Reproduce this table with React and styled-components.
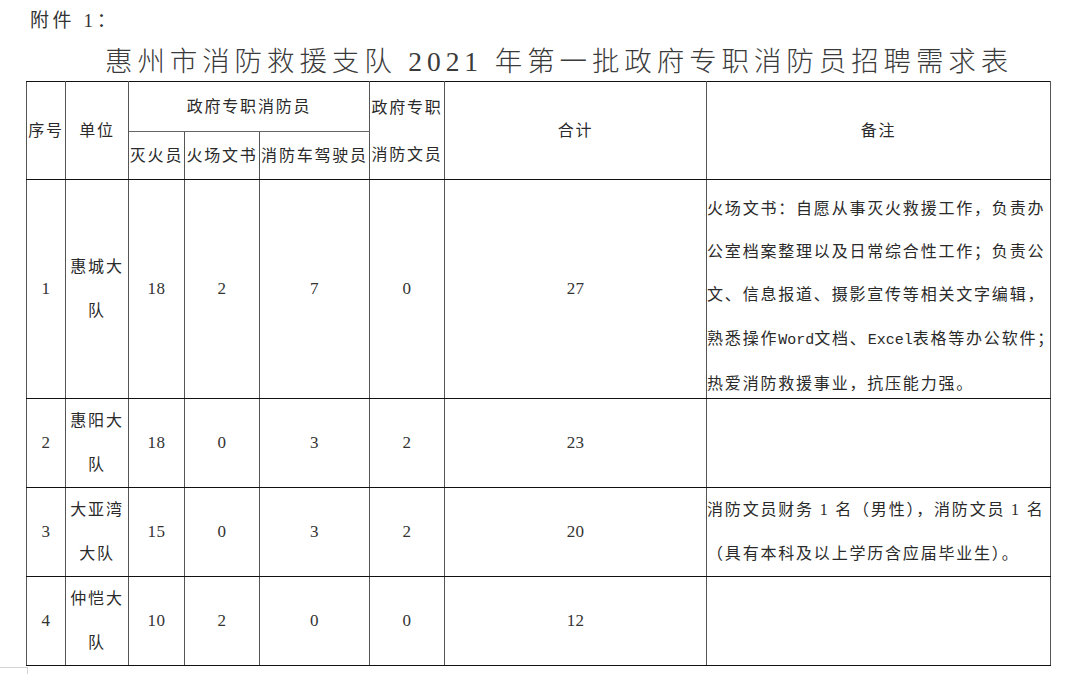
import React from "react";
import styled, { createGlobalStyle } from "styled-components";

const Global = createGlobalStyle`
  html, body { margin: 0; padding: 0; background: #ffffff; }
  body {
    font-family: "Liberation Serif", "Noto Sans CJK SC", serif;
    color: #262626;
  }
`;

const Page = styled.div`
  width: 1080px;
  height: 674px;
  overflow: hidden;
  background: #fff;
`;

const Attachment = styled.div`
  padding: 9px 0 0 30px;
  font-size: 19px;
  line-height: 24px;
  letter-spacing: 3.6px;
  color: #333;
  font-family: "Liberation Serif", "Noto Sans CJK SC", serif;
`;

const Title = styled.h1`
  margin: 0;
  padding: 9px 0 0 105px;
  font-size: 27.5px;
  line-height: 39px;
  font-weight: 300;
  letter-spacing: 4.9px;
  color: #3a3a3a;
  white-space: nowrap;
  font-family: "Liberation Serif", "Noto Sans CJK SC", serif;
`;

const TableWrap = styled.div`
  padding-left: 26px;
`;

const Table = styled.table`
  width: 1024px;
  table-layout: fixed;
  border-collapse: collapse;
  border: 1px solid #111;
  font-size: 16px;
  letter-spacing: 1.8px;
  color: #2a2a2a;
`;

const Head = styled.th`
  font-weight: 400;
  padding: 0;
  text-align: center;
  vertical-align: middle;
  white-space: ${(p) => (p.$nowrap ? "nowrap" : "normal")};
  height: ${(p) => (p.$h ? `${p.$h}px` : "auto")};
  line-height: ${(p) => p.$lh || 24}px;
  border-top: 1px solid #111;
  border-bottom: 1px solid ${(p) => (p.$softBottom ? "#666" : "#111")};
  border-left: 1px solid #555;
  border-right: 1px solid #555;
`;

const Cell = styled.td`
  padding: 0;
  text-align: ${(p) => (p.$left ? "left" : "center")};
  vertical-align: ${(p) => (p.$top ? "top" : "middle")};
  line-height: 44px;
  border-top: 1px solid #111;
  border-bottom: 1px solid #111;
  border-left: 1px solid #555;
  border-right: 1px solid #555;
`;

const Num = styled.span`
  font-family: "Liberation Serif", serif;
  font-size: 17px;
  letter-spacing: 0.4px;
  color: #333;
`;

const Notes = styled.div`
  white-space: nowrap;
  line-height: ${(p) => p.$lh || 44}px;
  padding-top: ${(p) => p.$shift || 0}px;
  margin-bottom: ${(p) => -(p.$shift || 0)}px;
`;

const Latin = styled.span`
  font-family: "Liberation Mono", monospace;
  font-size: 15px;
  letter-spacing: 0;
`;

const CornerMark = styled.div`
  width: 28px;
  height: 10px;
  margin-top: 1px;
  border-top: 1px solid #d4d4d4;
  border-right: 1px solid #d4d4d4;
  box-sizing: border-box;
`;

const widths = [39, 63, 56, 75, 110, 75, 262, 344];

const rows = [
  {
    no: 1,
    unit: "惠城大队",
    v: [18, 2, 7, 0],
    total: 27,
    notes: (
      <Notes $lh={43.2} $shift={7}>
        火场文书：自愿从事灭火救援工作，负责办
        <br />
        公室档案整理以及日常综合性工作；负责公
        <br />
        文、信息报道、摄影宣传等相关文字编辑，
        <br />
        熟悉操作<Latin>Word</Latin>文档、<Latin>Excel</Latin>表格等办公软件；
        <br />
        热爱消防救援事业，抗压能力强。
      </Notes>
    ),
  },
  { no: 2, unit: "惠阳大队", v: [18, 0, 3, 2], total: 23, notes: null },
  {
    no: 3,
    unit: "大亚湾大队",
    v: [15, 0, 3, 2],
    total: 20,
    notes: (
      <Notes>
        消防文员财务 1 名（男性），消防文员 1 名
        <br />
        （具有本科及以上学历含应届毕业生）。
      </Notes>
    ),
  },
  { no: 4, unit: "仲恺大队", v: [10, 2, 0, 0], total: 12, notes: null },
];

export default function App() {
  return (
    <Page>
      <Global />
      <Attachment>附件 1：</Attachment>
      <Title>惠州市消防救援支队 2021 年第一批政府专职消防员招聘需求表</Title>
      <TableWrap>
        <Table>
          <colgroup>
            {widths.map((w, i) => (
              <col key={i} style={{ width: w }} />
            ))}
          </colgroup>
          <thead>
            <tr>
              <Head rowSpan={2} $nowrap>序号</Head>
              <Head rowSpan={2} $nowrap>单位</Head>
              <Head colSpan={3} $h={49} $softBottom>政府专职消防员</Head>
              <Head rowSpan={2} $lh={47}>政府专职消防文员</Head>
              <Head rowSpan={2}>合计</Head>
              <Head rowSpan={2}>备注</Head>
            </tr>
            <tr>
              <Head $nowrap $h={47}>灭火员</Head>
              <Head $nowrap $h={47}>火场文书</Head>
              <Head $nowrap $h={47}>消防车驾驶员</Head>
            </tr>
          </thead>
          <tbody>
            {rows.map((r) => (
              <tr key={r.no}>
                <Cell><Num>{r.no}</Num></Cell>
                <Cell>{r.unit}</Cell>
                {r.v.map((n, i) => (
                  <Cell key={i}><Num>{n}</Num></Cell>
                ))}
                <Cell><Num>{r.total}</Num></Cell>
                <Cell $left $top={r.no === 1}>{r.notes}</Cell>
              </tr>
            ))}
          </tbody>
        </Table>
      </TableWrap>
      <CornerMark />
    </Page>
  );
}
